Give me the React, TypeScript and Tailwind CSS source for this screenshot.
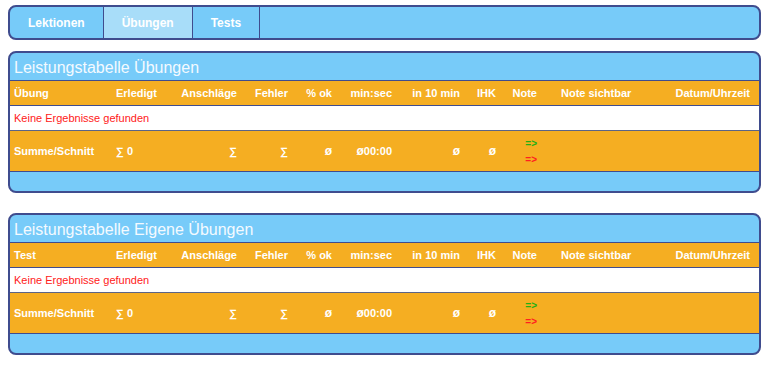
import React from "react";

const cols = "grid grid-cols-[102px_60px_69px_51px_44px_60px_68px_36px_41px_114px_1fr]";

const headers = [
  { label: "", cls: "pl-1 text-left" },
  { label: "Erledigt", cls: "pl-1 text-left" },
  { label: "Anschläge", cls: "pr-1 text-right" },
  { label: "Fehler", cls: "pr-1 text-right" },
  { label: "% ok", cls: "pr-1 text-right" },
  { label: "min:sec", cls: "pr-1 text-right" },
  { label: "in 10 min", cls: "pr-1 text-right" },
  { label: "IHK", cls: "pr-1 text-right" },
  { label: "Note", cls: "pr-1 text-right" },
  { label: "Note sichtbar", cls: "pl-[20px] text-left" },
  { label: "Datum/Uhrzeit", cls: "pr-[9px] text-right" },
];

const totals = ["Summe/Schnitt", "∑ 0", "∑", "∑", "ø", "ø00:00", "ø", "ø", "", "", ""];

function ResultPanel({ title, first }: { title: string; first: string }) {
  return (
    <div className="ml-2 mr-[7px] rounded-lg border-2 border-[#3f4c8e] bg-[#77cbf9] overflow-hidden">
      <div className="h-[28px] flex items-center pl-1 pt-[2px] text-[16px] text-[#f4faff] border-b border-[#3f4c8e]">
        {title}
      </div>
      <div className={`${cols} h-[25px] items-center bg-[#f5ae22] border-b border-[#3f4c8e] text-[11px] font-bold text-white`}>
        {headers.map((h, i) => (
          <div key={i} className={`whitespace-nowrap ${h.cls}`}>
            {i === 0 ? first : h.label}
          </div>
        ))}
      </div>
      <div className="h-[25px] flex items-center pl-1 bg-white border-b border-[#5b6488] text-[11px] text-[#ff2020]">
        Keine Ergebnisse gefunden
      </div>
      <div className={`${cols} h-[41px] items-center bg-[#f5ae22] border-b border-[#3f4c8e] text-[11px] font-bold text-white`}>
        {totals.map((t, i) =>
          i === 8 ? (
            <div key={i} className="pr-1 flex flex-col items-end gap-[5px] text-[10px] leading-[11px]">
              <span className="text-[#22b014]">=&gt;</span>
              <span className="text-[#ff2020]">=&gt;</span>
            </div>
          ) : (
            <div key={i} className={`whitespace-nowrap ${headers[i].cls}`}>
              {t.startsWith("ø") ? (
                <>
                  <span className="text-[12px]">ø</span>
                  {t.slice(1)}
                </>
              ) : (
                t
              )}
            </div>
          )
        )}
      </div>
      <div className="h-[19px]" />
    </div>
  );
}

export default function App() {
  return (
    <div className="min-h-[365px] bg-white pt-[5px] font-['Liberation_Sans',Arial,sans-serif]">
      <nav className="ml-2 mr-[7px] h-[35px] flex rounded-lg border-2 border-[#3f4c8e] bg-[#77cbf9] overflow-hidden text-[12px] font-bold text-white">
        <div className="flex items-center px-[18px] border-r border-[#3f4c8e]">Lektionen</div>
        <div className="flex items-center px-[18px] border-r border-[#3f4c8e] bg-[#a8ddf9]">Übungen</div>
        <div className="flex items-center px-[18px] border-r border-[#3f4c8e]">Tests</div>
      </nav>
      <div className="mt-[11px]">
        <ResultPanel title="Leistungstabelle Übungen" first="Übung" />
      </div>
      <div className="mt-[20px]">
        <ResultPanel title="Leistungstabelle Eigene Übungen" first="Test" />
      </div>
    </div>
  );
}
